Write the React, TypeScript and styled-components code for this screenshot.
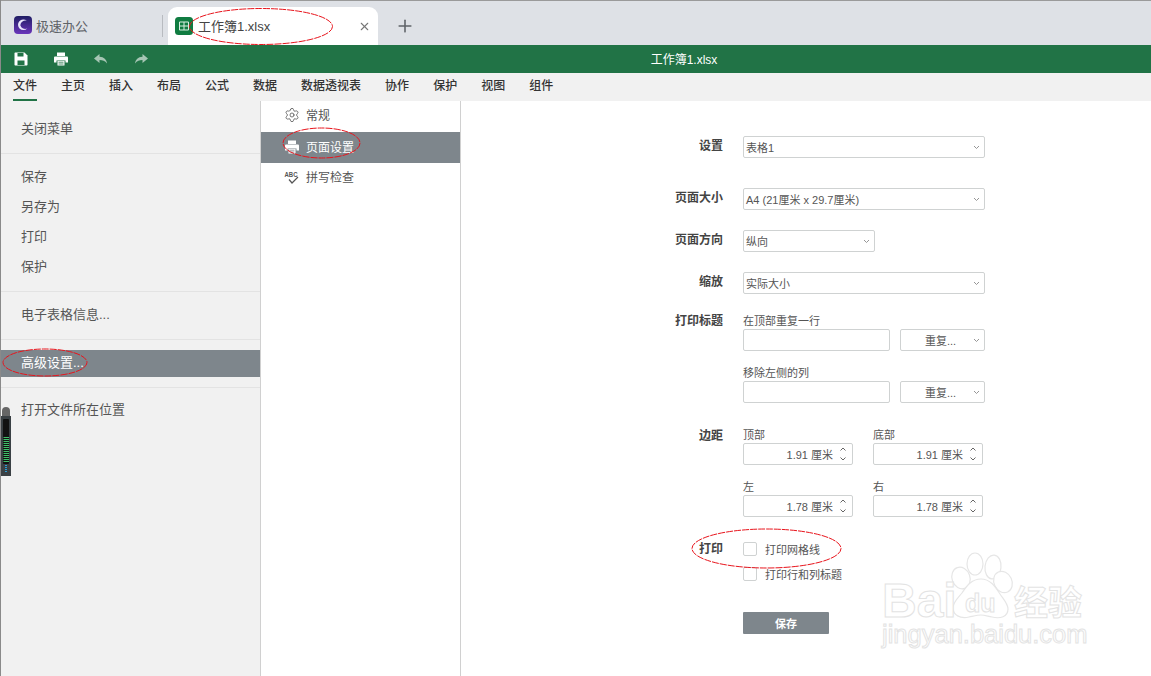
import { ReactNode } from "react";
import styled, { createGlobalStyle } from "styled-components";
import { Settings, X, Plus } from "lucide-react";

const GlobalStyle = createGlobalStyle`
  html, body {
    margin: 0;
    padding: 0;
    height: 100%;
    overflow: hidden;
    background: #fff;
  }
  body {
    font-family: "Liberation Sans", "Noto Sans CJK SC", sans-serif;
    color: #555;
  }
  #root { height: 100%; }
`;

const Page = styled.div`
  position: relative;
  width: 1151px;
  height: 676px;
  display: flex;
  flex-direction: column;
  overflow: hidden;
  box-sizing: border-box;
  border-left: 1px solid #8a8a8a;
`;

/* browser tabs */
const TabBar = styled.div`
  height: 45px;
  flex: none;
  box-sizing: border-box;
  background: #dee1e6;
  border-top: 1px solid #9a9a9a;
  display: flex;
  align-items: flex-end;
  padding-left: 13px;
`;

const AppTab = styled.div`
  width: 148px;
  height: 38px;
  display: flex;
  align-items: center;
  gap: 4px;
  font-size: 13px;
  color: #5f6368;
  padding-bottom: 2px;
  box-sizing: border-box;
`;

const TabDivider = styled.div`
  width: 1px;
  height: 22px;
  margin-bottom: 8px;
  background: #b8bbc0;
  flex: none;
`;

const ActiveTab = styled.div`
  width: 210px;
  height: 38px;
  margin-left: 5px;
  padding: 0 7px;
  box-sizing: border-box;
  background: #fff;
  border-radius: 9px 9px 0 0;
  display: flex;
  align-items: center;
  gap: 5px;
  font-size: 13px;
  color: #444;
`;

const TabTitle = styled.span`
  flex: 1;
  padding-bottom: 1px;
`;

const AddTab = styled.div`
  width: 24px;
  height: 38px;
  margin-left: 15px;
  display: flex;
  align-items: center;
  justify-content: center;
  color: #5f6368;
`;

/* green quick access bar */
const TitleBar = styled.div`
  height: 28px;
  flex: none;
  background: #217346;
  position: relative;
  display: flex;
  align-items: center;
  padding-left: 12px;
  gap: 24px;
`;

const TitleText = styled.div`
  flex: 1;
  text-align: center;
  color: #fff;
  font-size: 12px;
  padding: 0 0 2px 44px;
`;

const QuickIcon = styled.svg`
  width: 16px;
  height: 16px;
  flex: none;
`;

/* ribbon tabs */
const MenuBar = styled.div`
  height: 28px;
  flex: none;
  background: #f1f1f1;
  display: flex;
  padding-left: 12px;
  gap: 24px;
`;

const MenuTab = styled.div<{ $active?: boolean }>`
  height: 28px;
  box-sizing: border-box;
  line-height: 27px;
  font-size: 12px;
  font-weight: 500;
  color: #333;
  border-bottom: 2px solid ${(p) => (p.$active ? "#217346" : "transparent")};
`;

const Body = styled.div`
  flex: 1;
  display: flex;
  min-height: 0;
`;

/* file menu */
const FileMenu = styled.div`
  width: 259px;
  flex: none;
  background: #f1f1f1;
`;

const FileGroup = styled.div<{ $top?: number; $bottom?: number }>`
  display: flex;
  flex-direction: column;
  gap: 3px;
  padding: ${(p) => p.$top ?? 9}px 0 ${(p) => p.$bottom ?? 11}px;
  border-bottom: 1px solid #e3e3e3;
  &:last-child { border-bottom: none; }
`;

const FileItem = styled.div<{ $active?: boolean }>`
  height: 27px;
  line-height: ${(p) => (p.$active ? "25px" : "27px")};
  padding-left: 20px;
  font-size: 13px;
  color: ${(p) => (p.$active ? "#fff" : "#555")};
  background: ${(p) => (p.$active ? "#7e868c" : "transparent")};
`;

/* settings categories */
const SettingsNav = styled.div`
  width: 199px;
  flex: none;
  border-left: 1px solid #d0d0d0;
  border-right: 1px solid #d0d0d0;
`;

const NavItem = styled.div<{ $active?: boolean }>`
  height: 31px;
  box-sizing: border-box;
  display: flex;
  align-items: center;
  gap: 6px;
  padding-left: 23px;
  padding-bottom: ${(p) => (p.$active ? "2px" : "4px")};
  font-size: 12px;
  color: ${(p) => (p.$active ? "#fff" : "#555")};
  background: ${(p) => (p.$active ? "#7e868c" : "transparent")};
`;

const NavIcon = styled.svg`
  width: 16px;
  height: 16px;
  flex: none;
`;

/* form */
const FormPanel = styled.div`
  flex: 1;
  padding-top: 35px;
`;

const Row = styled.div<{ $top?: number }>`
  display: grid;
  grid-template-columns: 262px 1fr;
  column-gap: 20px;
  margin-top: ${(p) => p.$top ?? 0}px;
`;

const RowLabel = styled.div<{ $line?: number }>`
  text-align: right;
  font-size: 12px;
  font-weight: 700;
  color: #444;
  line-height: ${(p) => p.$line ?? 20}px;
`;

const Caption = styled.div`
  font-size: 11px;
  line-height: 15px;
  height: 15px;
  color: #555;
`;

const Stack = styled.div`
  display: flex;
  flex-direction: column;
  gap: 15px;
`;

const Inline = styled.div<{ $gap: number }>`
  display: flex;
  gap: ${(p) => p.$gap}px;
`;

const Control = styled.div<{ $width: number }>`
  width: ${(p) => p.$width}px;
  height: 22px;
  box-sizing: border-box;
  border: 1px solid #cfd2d2;
  border-radius: 2px;
  background: #fff;
  font-size: 11px;
  color: #555;
  display: flex;
  align-items: center;
  flex: none;
`;

const SelectText = styled.span<{ $center?: boolean }>`
  flex: 1;
  padding-left: ${(p) => (p.$center ? "24px" : "2px")};
`;

const Chevron = styled.svg`
  width: 7px;
  height: 5px;
  margin-right: 4px;
  flex: none;
`;

const SpinValue = styled.span`
  flex: 1;
  text-align: right;
  padding-right: 6px;
  font-size: 11px;
`;

const SpinArrows = styled.svg`
  width: 8px;
  height: 16px;
  margin-right: 5px;
  flex: none;
`;

const CheckLine = styled.div<{ $top?: number }>`
  display: flex;
  align-items: center;
  height: 14px;
  gap: 8px;
  margin-top: ${(p) => p.$top ?? 0}px;
  font-size: 11px;
  color: #555;
`;

const CheckBox = styled.span`
  width: 14px;
  height: 14px;
  box-sizing: border-box;
  border: 1px solid #cfd2d2;
  border-radius: 2px;
  flex: none;
`;

const SaveButton = styled.button`
  display: block;
  width: 86px;
  height: 22px;
  margin-top: 31px;
  padding: 0;
  border: none;
  border-radius: 1px;
  background: #7e868c;
  color: #fff;
  font-family: inherit;
  font-size: 11px;
  font-weight: 700;
`;

/* things lying over the page */
const Annotations = styled.svg`
  position: absolute;
  left: -1px;
  top: 0;
  width: 1151px;
  height: 676px;
  pointer-events: none;
`;

const Watermark = styled.svg`
  position: absolute;
  left: 859px;
  top: 540px;
  width: 291px;
  height: 136px;
  pointer-events: none;
`;

const MeterWidget = styled.svg`
  position: absolute;
  left: 0;
  top: 407px;
  width: 10px;
  height: 69px;
`;

const ChevronDown = () => (
  <Chevron viewBox="0 0 7 5">
    <path d="M1 1l2.500 2.500L6 1" fill="none" stroke="#8a8a8a" strokeWidth="0.9" />
  </Chevron>
);

const Dropdown = ({ width, center, children }: { width: number; center?: boolean; children?: ReactNode }) => (
  <Control $width={width}>
    <SelectText $center={center}>{children}</SelectText>
    <ChevronDown />
  </Control>
);

const Spinner = ({ value }: { value: string }) => (
  <Control $width={110}>
    <SpinValue>{value}</SpinValue>
    <SpinArrows viewBox="0 0 8 16">
      <path d="M1.500 4.500L4 2l2.500 2.500M1.500 11.500L4 14l2.500-2.500" fill="none" stroke="#666" strokeWidth="1" />
    </SpinArrows>
  </Control>
);

const SpinField = ({ label, value }: { label: string; value: string }) => (
  <div>
    <Caption>{label}</Caption>
    <Spinner value={value} />
  </div>
);

const AppLogo = () => (
  <svg width="18" height="18" viewBox="0 0 18 18" style={{ flex: "none" }}>
    <defs>
      <linearGradient id="appLogo" x1="0" y1="0" x2="0" y2="1">
        <stop offset="0" stopColor="#1f1d63" />
        <stop offset="1" stopColor="#6a35bb" />
      </linearGradient>
    </defs>
    <rect width="18" height="18" rx="4" fill="url(#appLogo)" />
    <path d="M12.800 4.800A5.300 5.300 0 1 0 13.200 12.400 5 5 0 0 1 6.300 9.300 5.200 5.200 0 0 1 12.800 4.800z" fill="#e8e6fb" />
  </svg>
);

const SheetLogo = () => (
  <svg width="18" height="18" viewBox="0 0 18 18" style={{ flex: "none" }}>
    <rect width="18" height="18" rx="3.500" fill="#107c41" />
    <path d="M4.500 5h9v8h-9zM4.500 9h9M9 5v8" fill="none" stroke="#d9efe2" strokeWidth="1" />
  </svg>
);

const PrinterPaths = ({ color, hole }: { color: string; hole: string }) => (
  <>
    <path d="M4 1.500h8v3.500H4z" fill={color} />
    <path d="M2.200 5.500h11.600c.7 0 1.200.5 1.200 1.200V11.500h-2.500V9.500H3.500v2H1V6.700c0-.7.5-1.200 1.200-1.200z" fill={color} />
    <path d="M4.500 10h7v4.500h-7z" fill={color} />
    <path d="M5.500 11.200h5M5.500 13h5" stroke={hole} strokeWidth="0.8" />
  </>
);

const App = () => (
  <>
    <GlobalStyle />
    <Page>
      <TabBar>
        <AppTab>
          <AppLogo />
          极速办公
        </AppTab>
        <TabDivider />
        <ActiveTab>
          <SheetLogo />
          <TabTitle>工作簿1.xlsx</TabTitle>
          <X size={13} color="#777" />
        </ActiveTab>
        <AddTab>
          <Plus size={20} strokeWidth={1.9} />
        </AddTab>
      </TabBar>

      <TitleBar>
        <QuickIcon viewBox="0 0 16 16">
          <path d="M2.500 1.500h9l3 3v9c0 .6-.4 1-1 1h-11c-.6 0-1-.4-1-1v-11c0-.6.4-1 1-1z" fill="#fff" />
          <path d="M4.500 2h6v3.500h-6zM4.500 9.500h7V14h-7z" fill="#217346" />
        </QuickIcon>
        <QuickIcon viewBox="0 0 16 16">
          <PrinterPaths color="#fff" hole="#217346" />
        </QuickIcon>
        <QuickIcon viewBox="0 0 16 16">
          <path d="M6.500 3L1 7.500l5.500 4.500V9c3 0 5.500.6 7.500 3.500-.5-4-3-6.500-7.500-6.700z" fill="#a6c5b4" />
        </QuickIcon>
        <QuickIcon viewBox="0 0 16 16">
          <path d="M9.500 3L15 7.500 9.500 12V9c-3 0-5.500.6-7.500 3.500.5-4 3-6.500 7.500-6.700z" fill="#a6c5b4" />
        </QuickIcon>
        <TitleText>工作簿1.xlsx</TitleText>
      </TitleBar>

      <MenuBar>
        <MenuTab $active>文件</MenuTab>
        <MenuTab>主页</MenuTab>
        <MenuTab>插入</MenuTab>
        <MenuTab>布局</MenuTab>
        <MenuTab>公式</MenuTab>
        <MenuTab>数据</MenuTab>
        <MenuTab>数据透视表</MenuTab>
        <MenuTab>协作</MenuTab>
        <MenuTab>保护</MenuTab>
        <MenuTab>视图</MenuTab>
        <MenuTab>组件</MenuTab>
      </MenuBar>

      <Body>
        <FileMenu>
          <FileGroup $top={14}>
            <FileItem>关闭菜单</FileItem>
          </FileGroup>
          <FileGroup>
            <FileItem>保存</FileItem>
            <FileItem>另存为</FileItem>
            <FileItem>打印</FileItem>
            <FileItem>保护</FileItem>
          </FileGroup>
          <FileGroup>
            <FileItem>电子表格信息...</FileItem>
          </FileGroup>
          <FileGroup $top={10} $bottom={10}>
            <FileItem $active>高级设置...</FileItem>
          </FileGroup>
          <FileGroup $top={8}>
            <FileItem>打开文件所在位置</FileItem>
          </FileGroup>
        </FileMenu>

        <SettingsNav>
          <NavItem>
            <Settings size={16} strokeWidth={1.2} color="#555" />
            常规
          </NavItem>
          <NavItem $active>
            <NavIcon viewBox="0 0 16 16">
              <PrinterPaths color="#fff" hole="#7e868c" />
            </NavIcon>
            页面设置
          </NavItem>
          <NavItem>
            <NavIcon viewBox="0 0 16 16">
              <text x="0.500" y="8" fontSize="7" fontWeight="700" fill="#555" fontFamily="Liberation Sans" textLength="13" lengthAdjust="spacingAndGlyphs">ABC</text>
              <path d="M5 10.500l3 3.500 6-6" fill="none" stroke="#555" strokeWidth="1.200" />
            </NavIcon>
            拼写检查
          </NavItem>
        </SettingsNav>

        <FormPanel>
          <Row>
            <RowLabel>设置</RowLabel>
            <Dropdown width={242}>表格1</Dropdown>
          </Row>
          <Row $top={30}>
            <RowLabel>页面大小</RowLabel>
            <Dropdown width={242}>A4 (21厘米 x 29.7厘米)</Dropdown>
          </Row>
          <Row $top={20}>
            <RowLabel>页面方向</RowLabel>
            <Dropdown width={132}>纵向</Dropdown>
          </Row>
          <Row $top={20}>
            <RowLabel>缩放</RowLabel>
            <Dropdown width={242}>实际大小</Dropdown>
          </Row>
          <Row $top={20}>
            <RowLabel $line={15}>打印标题</RowLabel>
            <Stack>
              <div>
                <Caption>在顶部重复一行</Caption>
                <Inline $gap={10}>
                  <Control $width={147} />
                  <Dropdown width={85} center>重复...</Dropdown>
                </Inline>
              </div>
              <div>
                <Caption>移除左侧的列</Caption>
                <Inline $gap={10}>
                  <Control $width={147} />
                  <Dropdown width={85} center>重复...</Dropdown>
                </Inline>
              </div>
            </Stack>
          </Row>
          <Row $top={25}>
            <RowLabel $line={17}>边距</RowLabel>
            <Stack>
              <Inline $gap={20}>
                <SpinField label="顶部" value="1.91 厘米" />
                <SpinField label="底部" value="1.91 厘米" />
              </Inline>
              <Inline $gap={20}>
                <SpinField label="左" value="1.78 厘米" />
                <SpinField label="右" value="1.78 厘米" />
              </Inline>
            </Stack>
          </Row>
          <Row $top={25}>
            <RowLabel $line={14}>打印</RowLabel>
            <div>
              <CheckLine>
                <CheckBox />
                打印网格线
              </CheckLine>
              <CheckLine $top={11}>
                <CheckBox />
                打印行和列标题
              </CheckLine>
              <SaveButton>保存</SaveButton>
            </div>
          </Row>
        </FormPanel>
      </Body>

      <MeterWidget viewBox="0 0 10 69">
        <rect x="1" y="0" width="8" height="20" rx="4" fill="#666" />
        <rect x="0" y="9" width="10" height="60" fill="#3a4044" />
        <rect x="2" y="12" width="6" height="45" rx="1" fill="#111" />
        {[30, 32, 34, 36, 38, 40, 42, 44, 46, 48, 50, 52, 54].map((y) => (
          <rect key={y} x="2.500" y={y} width="5.500" height="1" fill="#3fc06a" />
        ))}
        {[58, 60, 62, 64].map((y) => (
          <rect key={y} x="4" y={y} width="2" height="1" fill="#2a9fd8" />
        ))}
      </MeterWidget>

      <Watermark viewBox="0 0 291 136">
        <g fill="#fff" stroke="#e6e6e6" strokeWidth="1.200">
          <ellipse cx="115" cy="24" rx="8" ry="11" />
          <ellipse cx="133" cy="27" rx="8" ry="12" transform="rotate(6 133 27)" />
          <ellipse cx="101" cy="38" rx="9" ry="11" transform="rotate(-20 101 38)" />
          <ellipse cx="143" cy="42" rx="9" ry="11" transform="rotate(-25 143 42)" />
          <path d="M121 39c10 0 15 9 19 15 4 6 8 10 8 15 0 8-8 10-16 8-5-1-8-2-11-2s-7 1-12 2c-9 2-16-2-16-9 0-6 5-10 9-15 4-6 9-14 19-14z" />
        </g>
        <g fontFamily="Liberation Sans" fill="#fff" stroke="#e3e3e3" strokeWidth="1">
          <text x="22" y="77" fontSize="48" fontWeight="700">Bai</text>
          <text x="105" y="72" fontSize="25" fontWeight="700">du</text>
          <text x="154" y="75" fontSize="34" fontWeight="700" fontFamily="Noto Sans CJK SC">经验</text>
          <text x="22" y="103" fontSize="25.500">jingyan.baidu.com</text>
        </g>
      </Watermark>

      <Annotations viewBox="0 0 1151 676">
        <g fill="none" stroke="#e8141c" strokeWidth="1" strokeDasharray="7 1">
          <ellipse cx="261" cy="26.500" rx="71.500" ry="18" />
          <ellipse cx="45" cy="362.500" rx="42" ry="13.500" />
          <ellipse cx="321.500" cy="143" rx="38.500" ry="15" />
          <ellipse cx="766.500" cy="548.500" rx="74.500" ry="19.500" />
        </g>
      </Annotations>
    </Page>
  </>
);

export default App;
